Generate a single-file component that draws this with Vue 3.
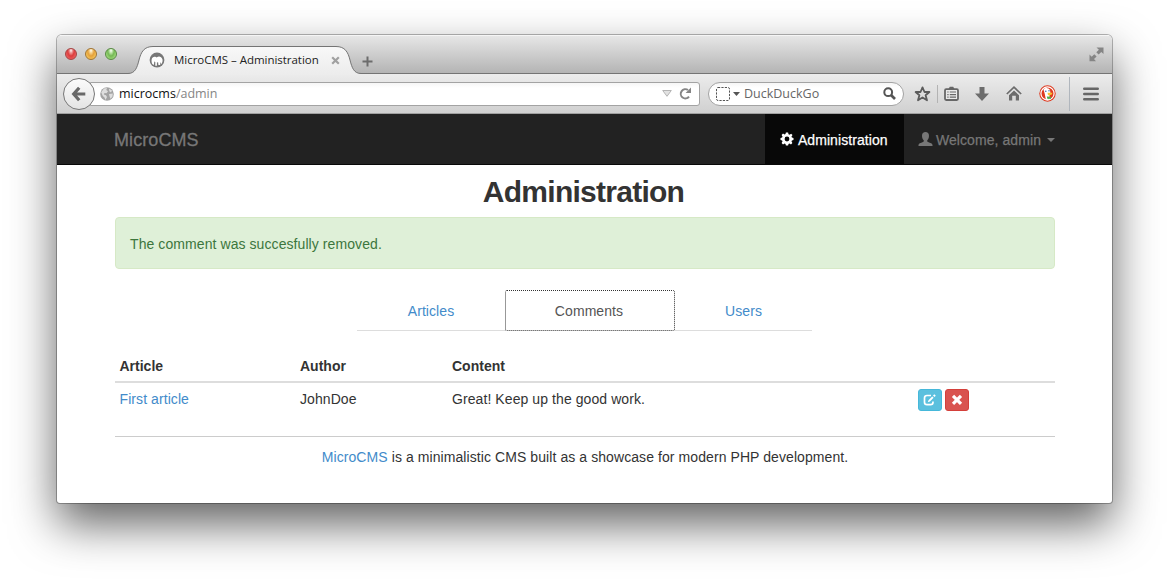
<script setup>
const tabs = [
  { id: 'articles', label: 'Articles' },
  { id: 'comments', label: 'Comments', active: true },
  { id: 'users', label: 'Users' },
]
</script>

<template>
  <div class="desktop">
    <div class="window">
      <header class="titlebar">
        <div class="lights"><i class="red"></i><i class="amber"></i><i class="green"></i></div>
        <div class="tab">
          <svg class="tab-shape" width="233" height="30" viewBox="0 0 233 30">
            <defs><linearGradient id="tg" x1="0" y1="0" x2="0" y2="1"><stop offset="0" stop-color="#f8f8f8" /><stop offset="1" stop-color="#ececec" /></linearGradient></defs>
            <path d="M0 28.500C7 28.500 9 23 11 15C13 7 16 1.500 25 1.500H208C217 1.500 220 7 222 15C224 23 226 28.500 233 28.500V30H0Z" fill="url(#tg)" />
            <path d="M0 28.500C7 28.500 9 23 11 15C13 7 16 1.500 25 1.500H208C217 1.500 220 7 222 15C224 23 226 28.500 233 28.500" fill="none" stroke="#747474" />
          </svg>
          <svg class="mamp" width="16" height="16" viewBox="0 0 16 16"><circle cx="8" cy="8" r="7.400" fill="#777" /><path d="M3.300 12C1.700 8.500 2.800 4.700 5.600 4.800C6.800 4.800 7.300 5.700 8 5.300C9.500 4 12.600 4.300 13.500 7.600C13.900 9.500 12.900 11.200 12.300 12.200L11.300 10L11.200 13H9.400L9.100 10.300L7.900 10.600V13.800H6.300V10L5.300 9.400L4.900 13Z" fill="#fff" /></svg>
          <span class="tab-title">MicroCMS – Administration</span>
          <svg class="tab-close" width="9" height="9" viewBox="0 0 9 9"><path d="M1.200 1.200L7.800 7.800M7.800 1.200L1.200 7.800" stroke="#a0a0a0" stroke-width="2.200" /></svg>
        </div>
        <svg class="plus" width="11" height="11" viewBox="0 0 11 11"><path d="M5.500 .5V10.500M.5 5.500H10.500" stroke="#6c6c6c" stroke-width="2" /></svg>
        <svg class="expand" width="15" height="15" viewBox="0 0 15 15" fill="#858585"><path d="M7.500 .5H14.500V7L12.300 5L9.600 7.500L7.300 5.300L9.900 2.700ZM.5 7.500L2.700 9.700L5.300 7.200L7.600 9.500L5 12L7 14.300H.5Z" /></svg>
      </header>

      <div class="toolbar">
        <div class="back"><svg width="16" height="16" viewBox="0 0 16 16"><path d="M8.200 1.800L2.700 8L8.200 14.200M3 8H14.300" fill="none" stroke="#686868" stroke-width="3.200" /></svg></div>
        <div class="urlbar">
          <svg class="globe" width="14" height="14" viewBox="0 0 14 14"><circle cx="7" cy="7" r="6.800" fill="#a3a3a3" /><path d="M1.200 5.200L4 1.500L7 1L6.300 3L8 4.200L6.500 6.200L4.500 6L3.800 7.500L6 8.200L7 10L5.500 13L4.500 10.500L2.800 9ZM9 1.500L12 3.500L11 5.500L9.300 4.200ZM9 7L12.800 6.500L12.500 9.500L10.500 11.800L9.600 9.500Z" fill="#dedede" /></svg>
          <span class="url"><b>microcms</b>/admin</span>
          <svg class="drop" width="10" height="7" viewBox="0 0 10 7"><path d="M.7 .5H9.300L5 6.300Z" fill="#e2e2e2" stroke="#b4b4b4" /></svg>
          <svg class="reload" width="13" height="13" viewBox="0 0 13 13"><path d="M10 9.600A4.600 4.600 0 1 1 9 3" fill="none" stroke="#858585" stroke-width="2" /><path d="M12 .6V6H6.600Z" fill="#858585" /></svg>
        </div>
        <div class="search">
          <svg width="14" height="14" viewBox="0 0 14 14"><rect x=".5" y=".5" width="13" height="13" rx="1.500" fill="none" stroke="#555" stroke-dasharray="2.200 1.200" /></svg>
          <svg class="caret-s" width="7" height="4" viewBox="0 0 7 4"><path d="M0 0H7L3.500 4Z" fill="#555" /></svg>
          <span class="engine">DuckDuckGo</span>
          <svg class="mag" width="13" height="13" viewBox="0 0 13 13"><circle cx="5.200" cy="5.200" r="3.900" fill="none" stroke="#555" stroke-width="2" /><path d="M8 8L12 12" stroke="#555" stroke-width="2.600" /></svg>
        </div>
        <svg class="star" width="17" height="16" viewBox="0 0 17 16"><path d="M8.500 1.400L10.500 6H15.400L11.600 9.200L13 14.300L8.500 11.500L4 14.300L5.400 9.200L1.600 6H6.500Z" fill="none" stroke="#5c5c5c" stroke-width="1.800" stroke-linejoin="round" /></svg>
        <i class="sep"></i>
        <svg class="list" width="15" height="15" viewBox="0 0 15 15"><path d="M4.500 3L5.800 .8H9.200L10.500 3Z" fill="#666" /><rect x="1" y="3.200" width="13" height="10.800" rx="1.200" fill="#e8e8e8" stroke="#666" stroke-width="1.800" /><path d="M3.300 6H4.600M5.800 6H12M3.300 8.600H4.600M5.800 8.600H12M3.300 11.200H4.600M5.800 11.200H12" stroke="#666" stroke-width="1.200" /></svg>
        <svg class="down" width="14" height="14" viewBox="0 0 14 14"><path d="M4.500 0H9.500V6.500H14L7 14L0 6.500H4.500Z" fill="#6c6c6c" /></svg>
        <svg class="home" width="16" height="15" viewBox="0 0 16 15"><path d="M.8 8L8 1.200L15.200 8" fill="none" stroke="#6c6c6c" stroke-width="1.700" /><path d="M3 9.200L8 4.500L13 9.200V14.500H9.800V9.700H6.200V14.500H3Z" fill="#6c6c6c" /></svg>
        <svg class="duck" width="17" height="17" viewBox="0 0 17 17"><circle cx="8.500" cy="8.500" r="8.200" fill="#de3a20" /><circle cx="8.500" cy="8.500" r="6.600" fill="#de3a20" stroke="#fff" stroke-width="1.200" /><path d="M4.500 4.500C5.500 2.300 9.800 2.400 11 5L11.500 8.500L10.300 11L11.500 14L8.500 15L6.800 14.500L5.800 9Z" fill="#fff" /><path d="M8.500 7.800L13.500 7.800L12.500 9.800L9 10.300Z" fill="#fbc22d" /><path d="M7.800 11.500L12 11.800V13.800L8.500 14Z" fill="#4cae4c" /><circle cx="6.800" cy="6.200" r=".8" fill="#3a68a8" /><circle cx="10" cy="5.800" r=".7" fill="#3a68a8" /></svg>
        <i class="sep long"></i>
        <svg class="menu" width="16" height="14" viewBox="0 0 16 14"><path d="M1.300 1.700H14.700M1.300 7H14.700M1.300 12.300H14.700" stroke="#666" stroke-width="2.600" stroke-linecap="round" /></svg>
      </div>

      <nav class="navbar">
        <a class="brand">MicroCMS</a>
        <div class="links">
          <a class="link current"><svg width="14" height="14" viewBox="0 0 14 14"><path fill="#fff" fill-rule="evenodd" d="M5.900 .5H8.100L8.500 2.200L9.600 2.700L11.100 1.700L12.500 3.100L11.500 4.600L11.900 5.600L13.500 5.900V8.100L11.900 8.500L11.500 9.500L12.400 11L11 12.400L9.500 11.400L8.500 11.900L8.100 13.500H5.900L5.500 11.900L4.500 11.400L3 12.400L1.600 11L2.500 9.500L2.100 8.500L.5 8.100V5.900L2.100 5.500L2.500 4.500L1.600 3L3 1.600L4.500 2.500L5.500 2.100ZM7 4.600A2.400 2.400 0 1 0 7 9.400A2.400 2.400 0 1 0 7 4.600Z" /></svg><span>Administration</span></a>
          <a class="link user"><svg width="15" height="14" viewBox="0 0 15 14"><path fill="#777" d="M7.500 0C9.600 0 11 1.300 11 3.700C11 5.700 10.200 7.200 9.300 8.200C9 9 9.300 9.700 10 10C12.500 11 14.500 11.200 14.500 13V14H.5V13C.5 11.200 2.500 11 5 10C5.700 9.700 6 9 5.700 8.200C4.800 7.200 4 5.700 4 3.700C4 1.300 5.400 0 7.500 0Z" /></svg><span>Welcome, admin</span><i class="caret"></i></a>
        </div>
      </nav>

      <main class="page">
        <h2>Administration</h2>
        <div class="alert">The comment was succesfully removed.</div>
        <ul class="tabs">
          <li v-for="tab in tabs" :key="tab.id" :class="[tab.id, { active: tab.active }]"><a>{{ tab.label }}</a></li>
        </ul>
        <table>
          <thead><tr><th class="c1">Article</th><th class="c2">Author</th><th class="c3">Content</th><th></th></tr></thead>
          <tbody><tr>
            <td><a>First article</a></td><td>JohnDoe</td><td>Great! Keep up the good work.</td>
            <td><div class="actions">
              <button class="edit"><svg width="14" height="12" viewBox="0 0 14 12"><path d="M8 1.500H4Q1.500 1.500 1.500 4V8.300Q1.500 10.700 4 10.700H7.500Q10 10.700 10 8.300V7.500" fill="none" stroke="#fff" stroke-width="1.700" /><path d="M4.800 8.300L5.500 6.200L9.200 2.400L10.600 3.800L6.900 7.500ZM10 1.600L11.300 .2L12.800 1.700L11.400 3Z" fill="#fff" /></svg></button>
              <button class="delete"><svg width="12" height="12" viewBox="0 0 12 12"><path d="M2 1.800L10 9.800M10 1.800L2 9.800" stroke="#fff" stroke-width="3.200" /></svg></button>
            </div></td>
          </tr></tbody>
        </table>
        <footer><a>MicroCMS</a> is a minimalistic CMS built as a showcase for modern PHP development.</footer>
      </main>
    </div>
  </div>
</template>

<style>
html, body { margin: 0; background: #fff; }
</style>
<style scoped>
* { box-sizing: border-box; }
.desktop { width: 1169px; height: 582px; padding: 35px 57px 0; overflow: hidden; background: #fff; }
.window { width: 1055px; height: 468px; border-radius: 5px 5px 3px 3px; overflow: hidden; background: #fff; font-family: "Liberation Sans", Arial, sans-serif; font-size: 14px; line-height: 20px; letter-spacing: .08px; color: #333; box-shadow: 0 0 0 1px rgba(0,0,0,.28), 0 21px 46px rgba(0,0,0,.62); }
svg { display: block; flex: none; }
.titlebar { height: 39px; display: flex; align-items: flex-start; background: linear-gradient(#e6e6e6, #b4b4b4); border-top: 1px solid #f5f5f5; border-bottom: 1px solid #747474; }
.lights { display: flex; gap: 8px; padding: 12px 0 0 8px; width: 71px; flex: none; }
.lights i { width: 12px; height: 12px; border-radius: 50%; border: 1px solid; flex: none; }
.lights .red { background: radial-gradient(ellipse at 50% 15%, #fff 0, #f0a0a0 18%, #dc3d3d 45%, #f47070 95%); border-color: #a54444; }
.lights .amber { background: radial-gradient(ellipse at 50% 15%, #fff 0, #f8d898 18%, #e4a03a 45%, #ffd96c 95%); border-color: #a07434; }
.lights .green { background: radial-gradient(ellipse at 50% 15%, #fff 0, #c4e8b0 18%, #74b854 45%, #b8ec90 95%); border-color: #588a44; }
.tab { position: relative; display: flex; width: 233px; height: 38px; padding-top: 8px; margin-bottom: -1px; font-family: "Open Sans", sans-serif; font-size: 11.500px; letter-spacing: -.03px; color: #222; }
.tab-shape { position: absolute; left: 0; bottom: -1px; }
.mamp { z-index: 1; margin: 8px 0 0 21px; }
.tab-title { z-index: 1; margin: 6px 0 0 9px; width: 157px; white-space: nowrap; }
.tab-close { z-index: 1; margin-top: 12px; }
.plus { margin: 20px 0 0 1px; }
.expand { margin: 11px 8px 0 auto; }
.toolbar { height: 40px; display: flex; align-items: center; background: linear-gradient(#ececec, #d0d0d0); border-bottom: 1px solid #a0a0a0; font-family: "Open Sans", sans-serif; font-size: 12.500px; letter-spacing: 0; }
.back { z-index: 1; width: 32px; height: 32px; margin-left: 6px; border: 1px solid #777; border-radius: 50%; background: linear-gradient(#fbfbfb, #e4e4e4); display: flex; align-items: center; justify-content: center; flex: none; }
.urlbar { width: 610px; height: 24px; margin-left: -5px; padding-left: 9px; display: flex; align-items: center; border: 1px solid #a3a3a3; border-radius: 0 3px 3px 0; background: linear-gradient(#f6f6f6, #fff 5px); flex: none; }
.url { margin: 1px 0 0 5px; color: #858585; }
.url b { font-weight: 400; color: #111; }
.drop { margin-left: auto; }
.reload { margin: 0 7px 0 7px; }
.search { width: 196px; height: 24px; margin-left: 8px; padding: 0 7px; display: flex; align-items: center; border: 1px solid #a3a3a3; border-radius: 12px; background: linear-gradient(#f6f6f6, #fff 5px); flex: none; }
.caret-s { margin-left: 3px; }
.engine { margin: 1px 0 0 4px; color: #666; }
.mag { margin-left: auto; }
.star { margin-left: 10px; }
.sep { width: 1px; height: 18px; margin-left: 6px; background: #b3b3b3; flex: none; }
.list { margin-left: 6px; }
.down { margin-left: 16px; }
.home { margin-left: 17px; }
.duck { margin-left: 17px; }
.long { height: 34px; margin-left: 13px; background: #b0b6bd; }
.menu { margin-left: 13px; }
.navbar { height: 51px; padding: 0 42px 0 57px; display: flex; justify-content: space-between; background: #222; border-bottom: 1px solid #080808; color: #777; }
.brand { font-size: 18px; line-height: 53px; -webkit-text-stroke: .3px #777; }
.links { display: flex; }
.link { display: flex; align-items: center; height: 50px; padding: 0 15px; -webkit-text-stroke: .25px; white-space: nowrap; }
.link span { margin: 1px 0 0 4px; }
.current { width: 139px; color: #fff; background: #080808; }
.user { padding-left: 14px; }
.user span { margin-left: 3px; }
.caret { margin: 2px 0 0 6px; border: 4px solid transparent; border-top-color: #777; border-bottom: 0; }
.page { padding: 10px 57px 0 58px; }
h2 { margin: 0; padding-right: 3px; font-size: 30px; line-height: 33px; letter-spacing: -.74px; text-align: center; }
.alert { margin-top: 9px; height: 52px; padding: 16px 14px; color: #3c763d; background: #dff0d8; border: 1px solid #d6e9c6; border-radius: 4px; }
.tabs { display: flex; width: 455px; height: 41px; margin: 21px 0 0 242px; padding: 0; list-style: none; border-bottom: 1px solid #ddd; }
.tabs li { height: 40px; text-align: center; line-height: 42px; color: #428bca; }
.tabs .articles { width: 148px; }
.tabs .comments { width: 170px; padding-right: 2px; }
.tabs .users { width: 137px; }
.tabs .active { height: 41px; line-height: 40px; color: #555; background: #fff; border: 1px dotted #333; border-radius: 2px; }
table { width: 940px; margin-top: 20px; border-collapse: collapse; table-layout: fixed; }
th, td { padding: 5px 4.500px; text-align: left; vertical-align: top; }
th { height: 31px; padding-bottom: 4px; border-bottom: 2px solid #ddd; letter-spacing: 0; }
td { padding-top: 6px; }
.c1 { width: 180.500px; } .c2 { width: 152px; } .c3 { width: 466px; }
td a, footer a { color: #428bca; }
.actions { display: flex; gap: 3px; }
button { width: 24px; height: 22px; padding: 0; border-radius: 3px; border: 1px solid; display: flex; align-items: center; justify-content: center; }
.edit { background: #5bc0de; border-color: #46b8da; }
.delete { background: #d9534f; border-color: #d43f3a; }
footer { margin-top: 20px; padding-top: 10px; border-top: 1px solid #ccc; text-align: center; }
</style>
